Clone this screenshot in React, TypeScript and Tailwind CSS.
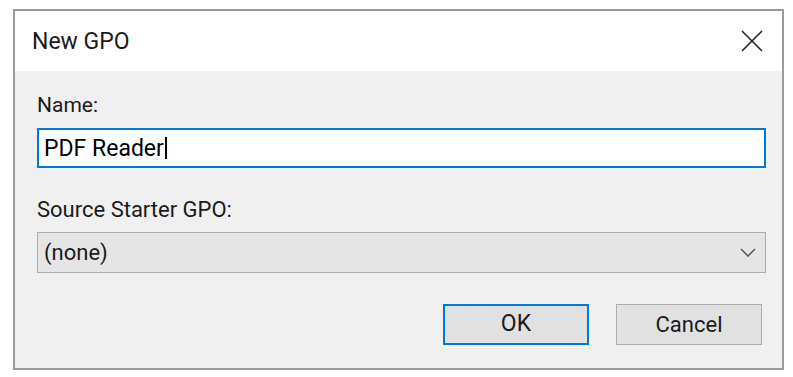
const font = { fontFamily: 'Roboto, "Noto Sans", Arial, sans-serif' };

export default function App() {
  return (
    <div className="w-[793px] h-[377px] bg-white pt-[9px] pl-[13px]" style={font}>
      <div className="w-[771px] h-[361px] border-2 border-[#9b9b9b] bg-[#f0f0f0] flex flex-col">
        {/* title bar */}
        <div className="h-[60px] bg-white flex items-center justify-between pl-[17px] pr-[19px] shrink-0">
          <span className="text-[23px] text-[#1a1a1a] leading-none">New GPO</span>
          <svg width="22" height="22" viewBox="0 0 22 22" className="text-[#222]">
            <path d="M1 1 L21 21 M21 1 L1 21" stroke="currentColor" strokeWidth="1.6" fill="none" />
          </svg>
        </div>

        {/* body */}
        <div className="flex flex-col pl-[22px] pr-[16px] pt-[22px]">
          <label className="text-[21px] text-[#1a1a1a] leading-[24px]">Name:</label>
          <div className="mt-[11px] h-[40px] border-2 border-[#0078d7] bg-white flex items-center pl-[5px]">
            <span className="text-[23px] text-black leading-none">PDF Reader</span>
            <span className="w-[2px] h-[22px] bg-black ml-[1px]" />
          </div>

          <label className="mt-[30px] text-[22px] text-[#1a1a1a] leading-[24px]">Source Starter GPO:</label>
          <div className="mt-[10px] h-[41px] border border-[#adadad] bg-[#e5e5e5] flex items-center justify-between pl-[6px] pr-[9px]">
            <span className="text-[22px] text-[#1a1a1a] leading-none">(none)</span>
            <svg width="16" height="9" viewBox="0 0 16 9" className="text-[#555]">
              <path d="M1 1 L8 8 L15 1" stroke="currentColor" strokeWidth="1.5" fill="none" />
            </svg>
          </div>

          <div className="mt-[31px] flex justify-end gap-[27px] pr-[4px]">
            <button className="w-[146px] h-[41px] border-2 border-[#0078d7] bg-[#e1e1e1] text-[23px] text-[#1a1a1a]">
              OK
            </button>
            <button className="w-[146px] h-[41px] border border-[#adadad] bg-[#e1e1e1] text-[22px] text-[#1a1a1a]">
              Cancel
            </button>
          </div>
        </div>
      </div>
    </div>
  );
}
